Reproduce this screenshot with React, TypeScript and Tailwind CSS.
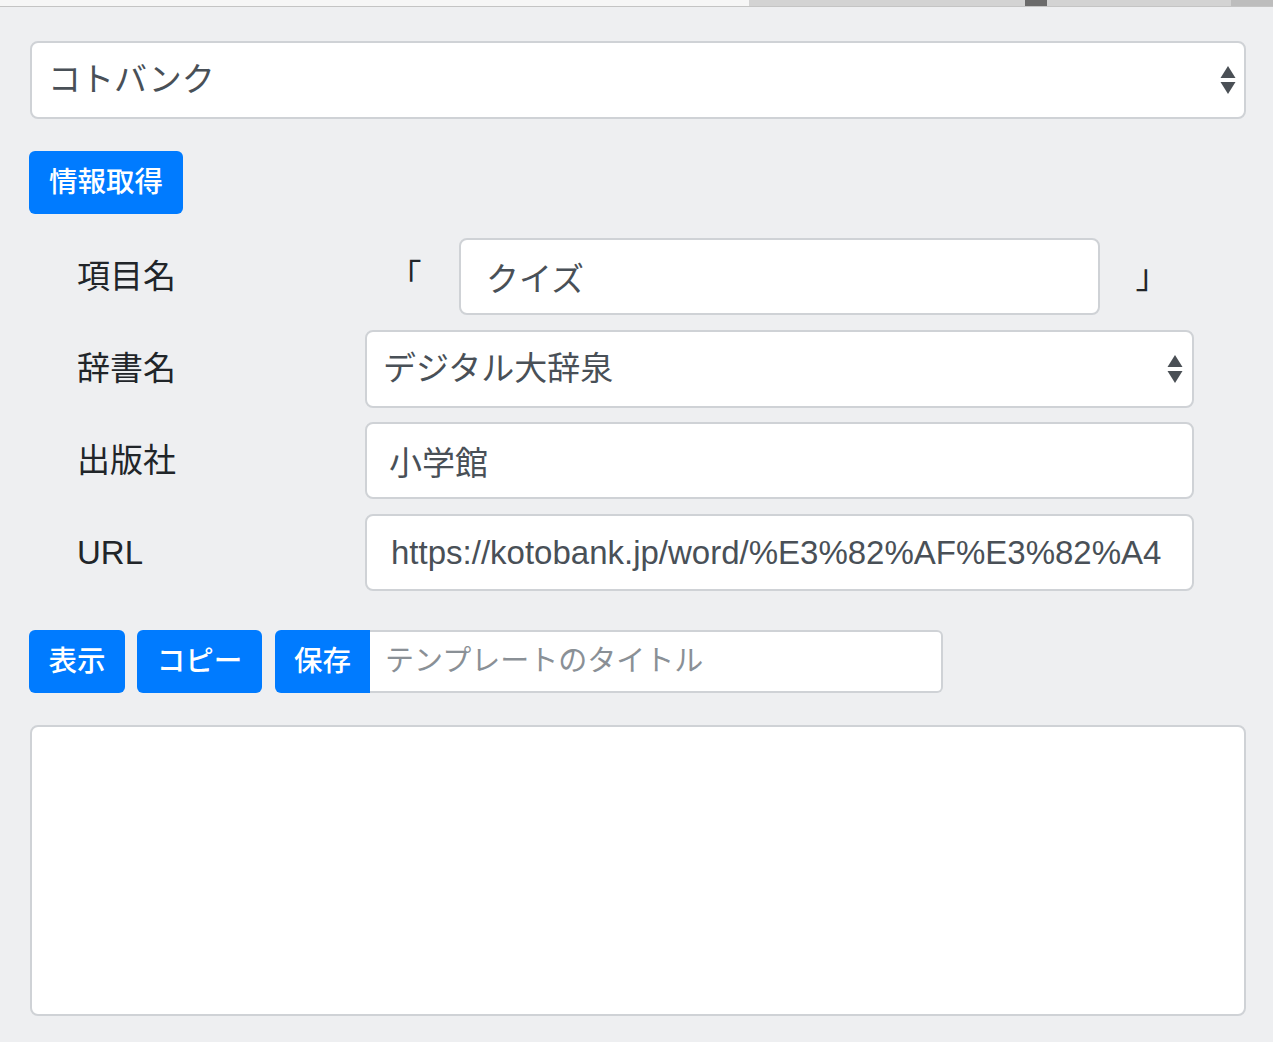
import React from "react";

const FONT = "font-['Liberation_Sans','Noto_Sans_CJK_JP',sans-serif]";

function UpDownArrows() {
  return (
    <svg width="16" height="32" viewBox="0 0 16 32" className="shrink-0">
      <path d="M8 2 L15.5 14 L0.5 14 Z" fill="#4a4f55" />
      <path d="M8 30 L15.5 18 L0.5 18 Z" fill="#4a4f55" />
    </svg>
  );
}

function TopStrip() {
  return (
    <div className="flex h-[7px] border-b border-[#c4c4c4]">
      <div className="w-[749px] bg-[#f6f6f6]" />
      <div className="flex flex-1 bg-[#d3d3d3]">
        <div className="w-[276px]" />
        <div className="w-[22px] bg-[#6b6b6b]" />
        <div className="flex-1" />
        <div className="w-[42px] bg-[#bdbdbd]" />
      </div>
    </div>
  );
}

function FakeSelect({ value, className }: { value: string; className: string }) {
  return (
    <div
      className={`flex h-[78px] items-center justify-between rounded-[8px] border-2 border-[#cfd2d6] bg-white text-[33px] text-[#495057] ${className}`}
    >
      <span>{value}</span>
      <UpDownArrows />
    </div>
  );
}

function Row({ label, children }: { label: string; children: React.ReactNode }) {
  return (
    <div className="flex h-[77px] items-center">
      <div className="w-[335px] pl-[47px] text-[33px] text-[#212529]">{label}</div>
      <div className="flex h-full w-[829px] items-center">{children}</div>
    </div>
  );
}

const inputCls =
  "h-full w-full min-w-0 rounded-[8px] border-2 border-[#cfd2d6] bg-white px-[24px] text-[33px] text-[#495057] outline-none";

const btnCls =
  "flex shrink-0 items-center justify-center bg-[#007bff] text-[28.5px] font-medium text-white";

export default function App() {
  const url = "https://kotobank.jp/word/%E3%82%AF%E3%82%A4";

  return (
    <div className={`min-h-screen bg-[#eeeff1] ${FONT}`}>
      <TopStrip />
      <div className="pl-[30px] pr-[27px] pt-[34px]">
        <FakeSelect value="コトバンク" className="pl-[16px] pr-[8px]" />

        <button className={`mt-[32px] -ml-[1px] h-[63px] w-[154px] rounded-[6px] ${btnCls}`}>情報取得</button>

        <div className="mt-[24px] flex flex-col gap-[15px]">
          <Row label="項目名">
            <div className="w-[94px] shrink-0 pr-[14px] text-center text-[33px] text-[#212529]">「</div>
            <input readOnly value="クイズ" className={`${inputCls} pl-[25px]`} />
            <div className="w-[94px] shrink-0 pl-[10px] text-center text-[33px] text-[#212529]">」</div>
          </Row>
          <Row label="辞書名">
            <FakeSelect value="デジタル大辞泉" className="w-full pl-[16px] pr-[9px]" />
          </Row>
          <Row label="出版社">
            <input readOnly value="小学館" className={`${inputCls} pl-[22px]`} />
          </Row>
          <Row label="URL">
            <input readOnly value={url} className={inputCls} />
          </Row>
        </div>

        <div className="mt-[39px] flex h-[63px] items-stretch">
          <button className={`-ml-[1px] w-[96px] rounded-[6px] ${btnCls}`}>表示</button>
          <button className={`ml-[12px] w-[125px] rounded-[6px] ${btnCls}`}>コピー</button>
          <div className="ml-[13px] flex w-[668px]">
            <button className={`w-[95px] rounded-l-[6px] ${btnCls}`}>保存</button>
            <input
              readOnly
              placeholder="テンプレートのタイトル"
              className="min-w-0 flex-1 rounded-r-[6px] border-2 border-l-0 border-[#cfd2d6] bg-white px-[15px] text-[29px] text-[#495057] outline-none placeholder:text-[#8a9096]"
            />
          </div>
        </div>

        <textarea
          readOnly
          className="mt-[32px] block h-[291px] w-full resize-none rounded-[8px] border-2 border-[#cfd2d6] bg-white outline-none"
        />
      </div>
    </div>
  );
}
